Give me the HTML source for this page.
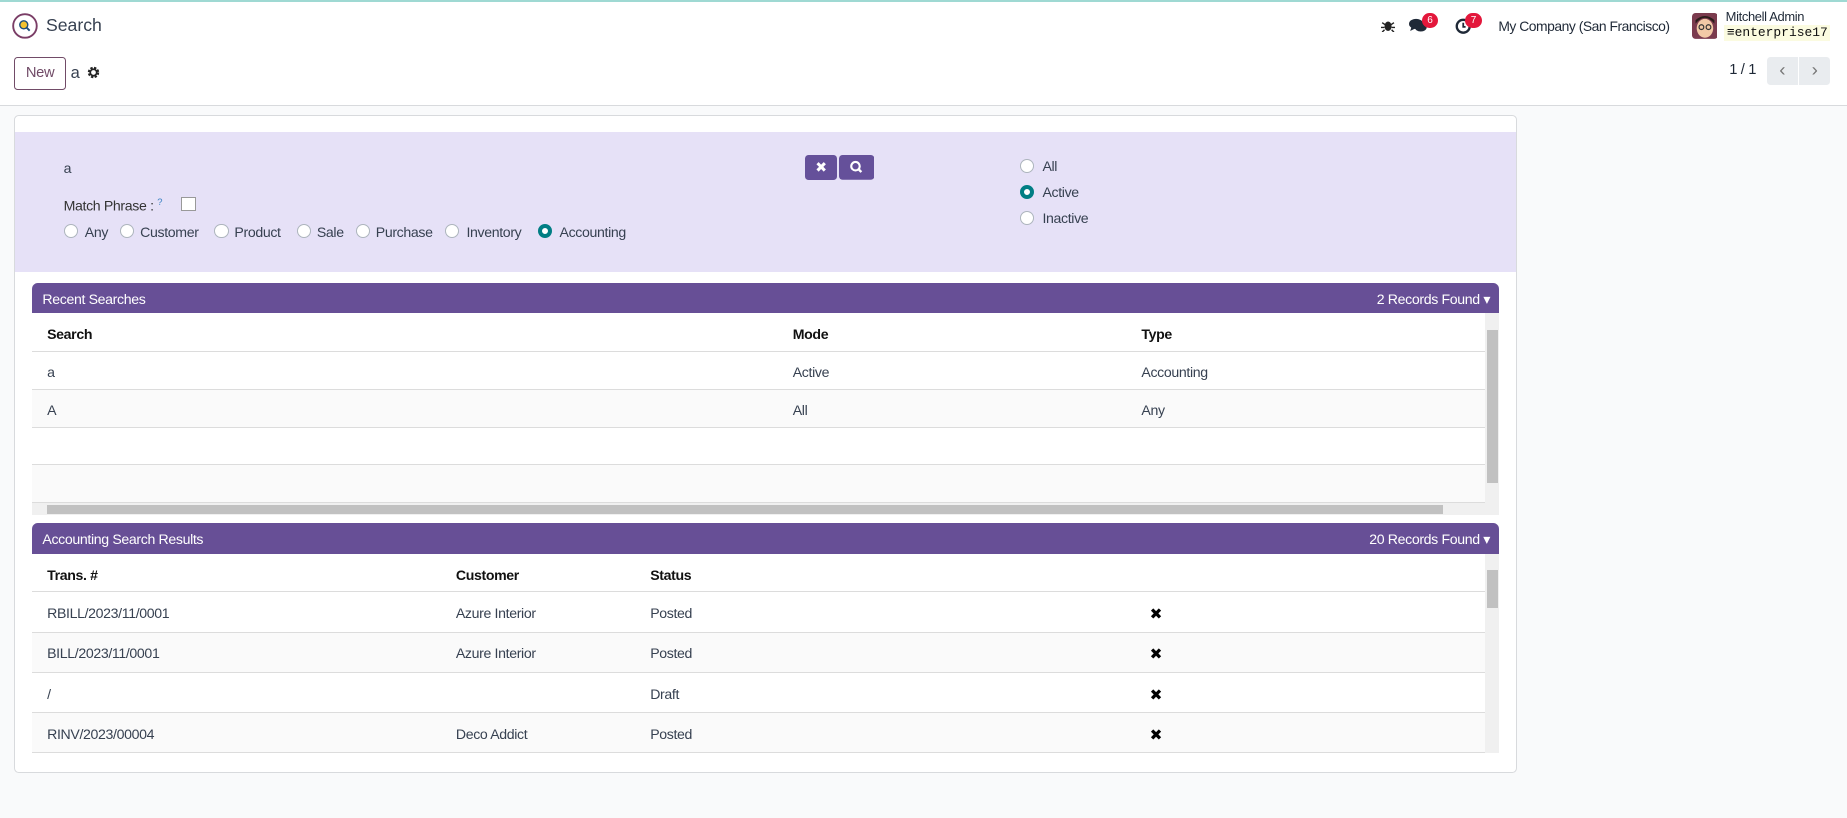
<!DOCTYPE html>
<html><head><meta charset="utf-8">
<style>
*{box-sizing:border-box;margin:0;padding:0}
html,body{width:1847px;height:818px;overflow:hidden;background:#f9fafb}
#w{width:1568px;height:694px;zoom:1.17793;position:relative;font-family:"Liberation Sans","DejaVu Sans",sans-serif;font-size:12px;letter-spacing:-0.3px;color:#374151;background:#f9fafb}
.a{position:absolute;white-space:nowrap}
.top{position:absolute;left:0;top:0;width:1568px;height:90px;background:#fff;border-bottom:1px solid #d8dadd}
.teal{position:absolute;left:0;top:0;width:1568px;height:2px;background:#9fd9d3}
.badge{position:absolute;background:#e3173b;color:#fff;border-radius:8px;font-size:8.5px;min-width:14px;height:13px;text-align:center;line-height:13px;letter-spacing:0}
.card{position:absolute;left:12px;top:98px;width:1276px;height:558px;background:#fff;border:1px solid #d8dadd;border-radius:4px}
.lav{position:absolute;left:13px;top:112px;width:1274px;height:119px;background:#e6e1f7}
.rad{position:absolute;width:12px;height:12px;border-radius:50%;border:1px solid #adb5bd;background:#fff}
.rad.on{border:3.5px solid #017e84;background:#fff}
.hdr{position:absolute;left:27px;width:1246px;height:26px;background:#674f96;color:#fff;border-radius:5px 5px 0 0}
.hdr span{top:7px!important}
.row{position:absolute;left:27px;width:1234px;border-bottom:1px solid #dcdcdc}
.row span{margin-top:2px}
.alt{background:#fafafa}
.th{font-weight:bold;color:#111}
.sb{position:absolute;background:#f0f0f0}
.thumb{position:absolute;background:#c1c1c1}
.x{font-weight:bold;color:#000;font-size:13px}
</style></head><body><div id="w">
<div class="top"></div><div class="teal"></div>
<svg class="a" style="left:10px;top:11px" width="22" height="22" viewBox="0 0 22 22"><circle cx="11" cy="11" r="10" fill="#fff" stroke="#7a3d66" stroke-width="1.6"/><circle cx="10" cy="10" r="3.4" fill="#f2c230" stroke="#1d4d7a" stroke-width="1.2"/><line x1="12.5" y1="12.5" x2="15" y2="15" stroke="#1d4d7a" stroke-width="1.6"/></svg>
<div class="a" style="left:39px;top:13px;font-size:15px;color:#374151;letter-spacing:0">Search</div>
<svg class="a" style="left:1172px;top:15px" width="12" height="12" viewBox="0 0 12 12"><ellipse cx="6" cy="7" rx="3" ry="4" fill="#222"/><path d="M1 4l3 2M11 4l-3 2M0 8h3M12 8H9M1 12l2-2M11 12l-2-2" stroke="#222" stroke-width="1.2"/></svg>
<svg class="a" style="left:1196px;top:15px" width="16" height="14" viewBox="0 0 16 14"><ellipse cx="6" cy="5" rx="6" ry="4.3" fill="#1f2937"/><path d="M2 8l-1 3 4-2z" fill="#1f2937"/><ellipse cx="10" cy="8" rx="5" ry="3.5" fill="#1f2937"/></svg>
<div class="badge" style="left:1207px;top:11px">6</div>
<svg class="a" style="left:1235px;top:15px" width="14" height="14" viewBox="0 0 14 14"><circle cx="7" cy="7" r="5.5" fill="none" stroke="#1f2937" stroke-width="2"/><path d="M7 4v3.5h2" stroke="#1f2937" stroke-width="1.5" fill="none"/></svg>
<div class="badge" style="left:1244px;top:11px">7</div>
<div class="a" style="left:1272px;top:15px;font-size:11.8px;letter-spacing:-0.4px;color:#1f2937">My Company (San Francisco)</div>
<svg class="a" style="left:1436px;top:11px" width="22" height="22" viewBox="0 0 22 22"><rect width="22" height="22" rx="3" fill="#7b3b4e"/><ellipse cx="11" cy="13" rx="7" ry="8" fill="#f2c9a6"/><path d="M3 9q8-10 16 0v-3q-8-7-16 0z" fill="#2a1d1a"/><circle cx="8" cy="12" r="2" fill="none" stroke="#333"/><circle cx="14" cy="12" r="2" fill="none" stroke="#333"/></svg>
<div class="a" style="left:1465px;top:8px;font-size:11px;color:#1f2937">Mitchell Admin</div>
<div class="a" style="left:1464px;top:21px;height:14px;background:#fbfbe0;font-family:'Liberation Mono',monospace;font-size:11px;color:#111;padding:0 2px;line-height:14px;letter-spacing:0">&#8801;enterprise17</div>
<div class="a" style="left:12px;top:48px;width:44px;height:28px;border:1px solid #714b67;border-radius:3px;color:#714b67;text-align:center;line-height:26px;font-size:12.5px">New</div>
<div class="a" style="left:60px;top:54px;font-size:14px;color:#374151">a</div>
<svg class="a" style="left:74px;top:56px" width="11" height="11" viewBox="0 0 12 12"><circle cx="6" cy="6" r="4" fill="none" stroke="#222" stroke-width="2.6" stroke-dasharray="2 1.2"/><circle cx="6" cy="6" r="3" fill="none" stroke="#222" stroke-width="1.6"/></svg>
<div class="a" style="left:1468px;top:53px;font-size:12.5px;color:#1f2937">1 / 1</div>
<div class="a" style="left:1500px;top:48px;width:26px;height:24px;background:#e9ecef;border-radius:3px 0 0 3px;color:#777;text-align:center;line-height:22px;font-size:16px">&#8249;</div>
<div class="a" style="left:1527px;top:48px;width:27px;height:24px;background:#e9ecef;border-radius:0 3px 3px 0;color:#777;text-align:center;line-height:22px;font-size:16px">&#8250;</div>

<div class="card"></div>
<div class="lav"></div>
<div class="a" style="left:54px;top:136px">a</div>
<div class="a" style="left:54px;top:166px;color:#333">Match Phrase : <sup style="color:#3b82c4;font-size:8px">?</sup></div>
<div class="a" style="left:154px;top:167px;width:12px;height:12px;border:1px solid #999;background:#fff"></div>
<div class="rad" style="left:54px;top:190px"></div><div class="a" style="left:72px;top:190px">Any</div>
<div class="rad" style="left:102px;top:190px"></div><div class="a" style="left:119px;top:190px">Customer</div>
<div class="rad" style="left:182px;top:190px"></div><div class="a" style="left:199px;top:190px">Product</div>
<div class="rad" style="left:252px;top:190px"></div><div class="a" style="left:269px;top:190px">Sale</div>
<div class="rad" style="left:302px;top:190px"></div><div class="a" style="left:319px;top:190px">Purchase</div>
<div class="rad" style="left:378px;top:190px"></div><div class="a" style="left:396px;top:190px">Inventory</div>
<div class="rad on" style="left:457px;top:190px"></div><div class="a" style="left:475px;top:190px">Accounting</div>
<div class="a" style="left:683px;top:132px;width:28px;height:21px;background:#65509a;border-radius:3px;color:#fff;text-align:center;line-height:21px;font-weight:bold;font-size:12px">&#10006;</div>
<svg class="a" style="left:712px;top:132px" width="30" height="21" viewBox="0 0 30 21"><rect width="30" height="21" rx="3" fill="#65509a"/><circle cx="14" cy="9.5" r="3.6" fill="none" stroke="#fff" stroke-width="1.8"/><line x1="16.6" y1="12.1" x2="19" y2="14.5" stroke="#fff" stroke-width="2"/></svg>
<div class="rad" style="left:866px;top:135px"></div><div class="a" style="left:885px;top:134px">All</div>
<div class="rad on" style="left:866px;top:157px"></div><div class="a" style="left:885px;top:156px">Active</div>
<div class="rad" style="left:866px;top:179px"></div><div class="a" style="left:885px;top:178px">Inactive</div>

<div class="hdr" style="top:240px"><span class="a" style="left:9px;top:6px">Recent Searches</span><span class="a" style="right:8px;top:6px">2 Records Found &#9662;</span></div>
<div class="row" style="top:266px;height:33px"><span class="a th" style="left:13px;top:9px">Search</span><span class="a th" style="left:646px;top:9px">Mode</span><span class="a th" style="left:942px;top:9px">Type</span></div>
<div class="row" style="top:299px;height:32px"><span class="a" style="left:13px;top:8px">a</span><span class="a" style="left:646px;top:8px">Active</span><span class="a" style="left:942px;top:8px">Accounting</span></div>
<div class="row alt" style="top:331px;height:32px"><span class="a" style="left:13px;top:8px">A</span><span class="a" style="left:646px;top:8px">All</span><span class="a" style="left:942px;top:8px">Any</span></div>
<div class="row" style="top:363px;height:32px"></div>
<div class="row alt" style="top:395px;height:32px"></div>
<div class="sb" style="left:1261px;top:266px;width:12px;height:171px"></div>
<div class="thumb" style="left:1262px;top:280px;width:10px;height:130px"></div>
<div class="sb" style="left:27px;top:427px;width:1234px;height:10px"></div>
<div class="thumb" style="left:40px;top:429px;width:1185px;height:7px"></div>

<div class="hdr" style="top:444px"><span class="a" style="left:9px;top:6px">Accounting Search Results</span><span class="a" style="right:8px;top:6px">20 Records Found &#9662;</span></div>
<div class="row" style="top:470px;height:33px"><span class="a th" style="left:13px;top:9px">Trans. #</span><span class="a th" style="left:360px;top:9px">Customer</span><span class="a th" style="left:525px;top:9px">Status</span></div>
<div class="row" style="top:503px;height:34px"><span class="a" style="left:13px;top:9px">RBILL/2023/11/0001</span><span class="a" style="left:360px;top:9px">Azure Interior</span><span class="a" style="left:525px;top:9px">Posted</span><span class="a x" style="left:949px;top:9px">&#10006;</span></div>
<div class="row alt" style="top:537px;height:34px"><span class="a" style="left:13px;top:9px">BILL/2023/11/0001</span><span class="a" style="left:360px;top:9px">Azure Interior</span><span class="a" style="left:525px;top:9px">Posted</span><span class="a x" style="left:949px;top:9px">&#10006;</span></div>
<div class="row" style="top:571px;height:34px"><span class="a" style="left:13px;top:9px">/</span><span class="a" style="left:525px;top:9px">Draft</span><span class="a x" style="left:949px;top:9px">&#10006;</span></div>
<div class="row alt" style="top:605px;height:34px"><span class="a" style="left:13px;top:9px">RINV/2023/00004</span><span class="a" style="left:360px;top:9px">Deco Addict</span><span class="a" style="left:525px;top:9px">Posted</span><span class="a x" style="left:949px;top:9px">&#10006;</span></div>
<div class="sb" style="left:1261px;top:470px;width:12px;height:169px"></div>
<div class="thumb" style="left:1262px;top:484px;width:10px;height:32px"></div>
</div></body></html>
